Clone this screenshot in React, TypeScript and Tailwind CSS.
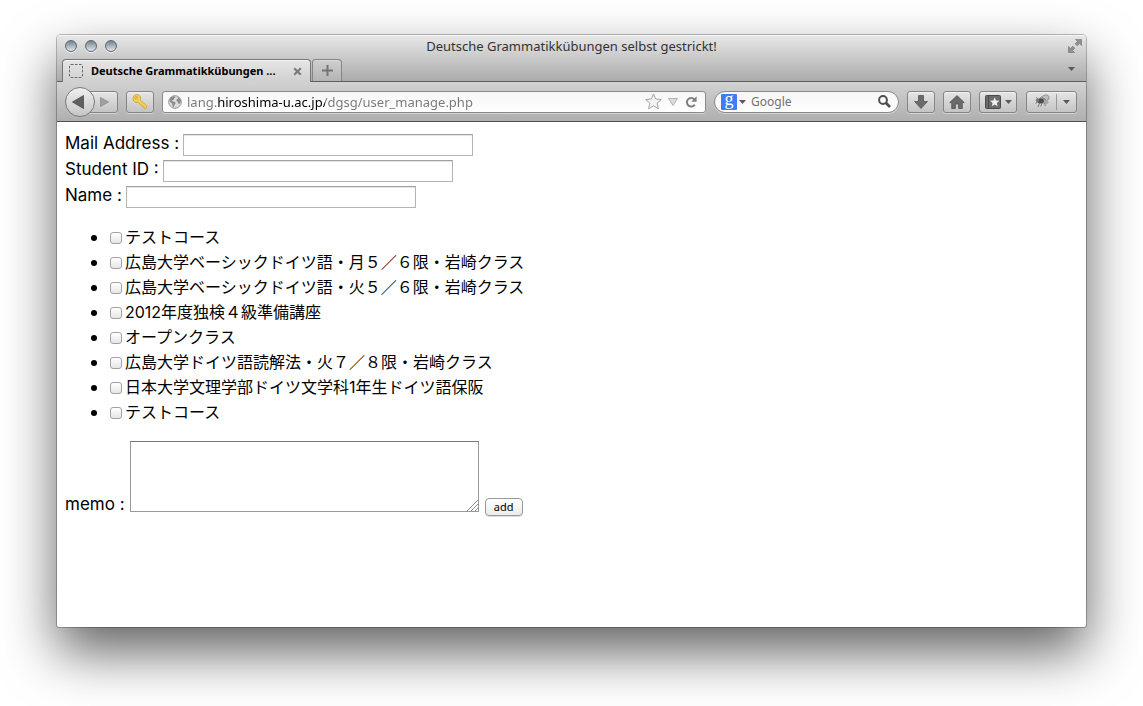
import type { ReactNode } from 'react';

const courses = [
  'テストコース',
  '広島大学ベーシックドイツ語・月５／６限・岩崎クラス',
  '広島大学ベーシックドイツ語・火５／６限・岩崎クラス',
  '2012年度独検４級準備講座',
  'オープンクラス',
  '広島大学ドイツ語読解法・火７／８限・岩崎クラス',
  '日本大学文理学部ドイツ文学科1年生ドイツ語保阪',
  'テストコース',
];

function WindowButton({ label }: { label: string }) {
  return (
    <button
      aria-label={label}
      className="h-3 w-3 rounded-full border border-[#5f666d] bg-linear-to-b from-[#77828c] via-[#a9b5bf] to-[#dfe8ef] shadow-[0_1px_0_#f4f4f4]"
    />
  );
}

function ToolButton({ label, className, children }: { label: string; className: string; children: ReactNode }) {
  return (
    <button
      aria-label={label}
      className={`flex h-[22px] shrink-0 items-center justify-center rounded-[3px] border border-[#858585] bg-linear-to-b from-[#e6e6e6] to-[#c4c4c4] shadow-[0_1px_0_#d4d4d4,inset_0_1px_0_#f0f0f0] ${className}`}
    >
      {children}
    </button>
  );
}

function Caret() {
  return (
    <svg width="7" height="4" viewBox="0 0 7 4" className="shrink-0">
      <path d="M0 0h7L3.5 4z" fill="#5a5a5a" />
    </svg>
  );
}

function TitleBar() {
  return (
    <div className="grid h-[22px] grid-cols-[1fr_auto_1fr] items-center px-1">
      <div className="flex gap-2 pl-1">
        <WindowButton label="Close" />
        <WindowButton label="Minimize" />
        <WindowButton label="Zoom" />
      </div>
      <h1 className="text-[13px] leading-5 text-[#333]">Deutsche Grammatikkübungen selbst gestrickt!</h1>
      <button aria-label="Full screen" className="justify-self-end">
        <svg width="14" height="14" viewBox="0 0 14 14" fill="#909090" stroke="#707070" strokeWidth="0.6">
          <path d="M7.5.5h6v6l-2-2-2.3 2.3-2-2 2.3-2.3z" />
          <path d="M.5 7.5l2 2 2.3-2.3 2 2-2.3 2.3 2 2h-6z" />
        </svg>
      </button>
    </div>
  );
}

function TabStrip() {
  return (
    <div className="flex h-[25px] items-end border-b border-[#5e5e5e] pr-[11px] pl-[5px]">
      <div className="relative -mb-px flex h-[23px] w-[249px] items-center rounded-t-[4px] border border-b-0 border-[#767676] bg-linear-to-b from-[#e6e6e6] to-[#d0d0d0] pr-2 pl-[6px] shadow-[inset_0_1px_0_#f4f4f4]">
        <svg width="14" height="14" viewBox="0 0 14 14" className="shrink-0">
          <rect x="0.5" y="0.5" width="13" height="13" rx="1.5" fill="none" stroke="#666" strokeDasharray="2.5 1.5" />
        </svg>
        <span className="ml-2 flex-1 truncate text-[11px] leading-5 font-bold text-black">Deutsche Grammatikkübungen ...</span>
        <button aria-label="Close tab">
          <svg width="9" height="9" viewBox="0 0 9 9">
            <path d="M1.2 1.2l6.600 6.600M7.800 1.200L1.200 7.800" stroke="#7c7c7c" strokeWidth="2.2" />
          </svg>
        </button>
      </div>
      <button
        aria-label="New tab"
        className="ml-px flex h-[22px] w-[30px] items-center justify-center rounded-t-[4px] border border-b-0 border-[#858585] bg-linear-to-b from-[#cfcfcf] to-[#b4b4b4] shadow-[inset_0_1px_0_#dadada]"
      >
        <svg width="11" height="11" viewBox="0 0 11 11">
          <path d="M5.5 0v11M0 5.5h11" stroke="#747474" strokeWidth="2" />
        </svg>
      </button>
      <button aria-label="List all tabs" className="ml-auto flex h-6 items-center">
        <Caret />
      </button>
    </div>
  );
}

function BackForward() {
  return (
    <div className="flex shrink-0 items-center">
      <button
        aria-label="Back"
        className="z-10 flex h-[30px] w-[30px] items-center justify-center rounded-full border border-[#7a7a7a] bg-linear-to-b from-[#efefef] to-[#c6c6c6]"
      >
        <svg width="12" height="14" viewBox="0 0 12 14" className="-ml-1">
          <path d="M11.5.5v13L.5 7z" fill="#606060" stroke="#444" strokeWidth="0.7" />
        </svg>
      </button>
      <ToolButton label="Forward" className="-ml-2 w-[31px] pl-1">
        <svg width="9" height="10" viewBox="0 0 9 10">
          <path d="M.5.5v9L8.5 5z" fill="#a0a0a0" stroke="#888" strokeWidth="0.7" />
        </svg>
      </ToolButton>
    </div>
  );
}

function LocationBar() {
  return (
    <div className="flex h-[22px] min-w-0 flex-1 items-center rounded-[3px] border border-[#8a8a8a] bg-linear-to-b from-[#f6f6f6] to-white pr-2 pl-[5px] shadow-[0_1px_0_#d4d4d4]">
      <svg width="14" height="14" viewBox="0 0 14 14" className="shrink-0">
        <circle cx="7" cy="7" r="6.3" fill="#dcdcdc" stroke="#939393" />
        <path
          d="M1.5 4.2C2.6 2.2 4.5 1 6.6 1.2l1 1-1.4.7-.3 1.5-1.9.9.6 1.2 2.1.3 1 1.5-1.3 1.6-.5 2.4-1.4-1.3-.3-2.5-2-1.4zM9.3 1.8c2 .8 3.3 2.4 3.5 4.4l-1 2.6-1.5-.4-.5-1.7-1.4-.6.2-1.7 1.5-.7z"
          fill="#8a8a8a"
        />
      </svg>
      <input
        aria-label="Location"
        defaultValue="lang.hiroshima-u.ac.jp/dgsg/user_manage.php"
        className="ml-[5px] min-w-0 flex-1 bg-[linear-gradient(90deg,#777_30px,#000_30px,#000_138px,#777_138px)] bg-clip-text text-[13px] leading-5 text-transparent caret-black outline-none"
      />
      <button aria-label="Bookmark this page">
        <svg width="17" height="17" viewBox="0 0 17 17">
          <path d="M8.5.9l2.2 5.1 5.6.5-4.2 3.7 1.3 5.6-4.9-3-4.9 3 1.3-5.6L.7 6.5 6.3 6z" fill="#f3f3f3" stroke="#a2a2a2" />
        </svg>
      </button>
      <button aria-label="Show history" className="ml-[6px]">
        <svg width="10" height="8" viewBox="0 0 10 8">
          <path d="M.5.5h9L5 7.5z" fill="#dcdcdc" stroke="#b4b4b4" />
        </svg>
      </button>
      <button aria-label="Reload" className="ml-[7px]">
        <svg width="12" height="12" viewBox="0 0 12 12">
          <path d="M9.3 3.2A4.3 4.3 0 1 0 9.8 8.6" fill="none" stroke="#808080" strokeWidth="2" />
          <path d="M11.6.3v5.500H6.200z" fill="#808080" />
        </svg>
      </button>
    </div>
  );
}

function SearchBar() {
  return (
    <div className="flex h-[22px] w-[185px] shrink-0 items-center rounded-full border border-[#8a8a8a] bg-linear-to-b from-[#f6f6f6] to-white pr-[7px] pl-[6px] shadow-[0_1px_0_#d4d4d4]">
      <button aria-label="Search engine" className="flex items-center gap-[2px]">
        <span className="h-4 w-4 rounded-[1px] bg-[#3f7cf5] text-center font-['Liberation_Serif',serif] text-[18px] leading-[11px] text-white">g</span>
        <Caret />
      </button>
      <input
        aria-label="Search"
        placeholder="Google"
        className="ml-[5px] min-w-0 flex-1 text-[12px] leading-5 outline-none placeholder:text-[#707070]"
      />
      <button aria-label="Go">
        <svg width="13" height="13" viewBox="0 0 13 13" fill="none" stroke="#505050">
          <circle cx="5" cy="5" r="3.9" strokeWidth="2" />
          <path d="M8 8l4 4" strokeWidth="2.6" />
        </svg>
      </button>
    </div>
  );
}

function Toolbar() {
  return (
    <div className="flex h-10 items-center gap-2 border-b border-[#505050] bg-linear-to-b from-[#d2d2d2] to-[#afafaf] pr-[9px] pl-2">
      <BackForward />
      <ToolButton label="Passwords" className="w-7">
        <svg width="16" height="16" viewBox="0 0 16 16">
          <path
            d="M2.1 1.6C3.7.2 6.2.3 7.6 1.8c1.1 1.2 1.3 2.8.7 4.1l6.2 5.8-.2 2.6-2.3.2-.3-1.6-1.5-.2-.3-1.6-1.5-.3L6.2 8.3c-1.6.6-3.3.1-4.3-1.1C.6 5.6.7 3 2.1 1.6z"
            fill="#f6cf52"
            stroke="#c79a2c"
            strokeWidth="0.7"
          />
          <circle cx="3.9" cy="3.7" r="1.2" fill="#d8d0b8" stroke="#b88b25" strokeWidth="0.6" />
        </svg>
      </ToolButton>
      <LocationBar />
      <SearchBar />
      <ToolButton label="Downloads" className="w-7">
        <svg width="14" height="14" viewBox="0 0 14 14">
          <path d="M4.5.5h5v6h4L7 13.5.5 6.5h4z" fill="#6b6b6b" stroke="#4a4a4a" strokeWidth="0.7" />
        </svg>
      </ToolButton>
      <ToolButton label="Home" className="w-7">
        <svg width="16" height="14" viewBox="0 0 16 14">
          <path d="M8 .6l7.3 7h-2v5.9H9.6V9H6.4v4.5H2.7V7.6h-2z" fill="#6b6b6b" stroke="#4a4a4a" strokeWidth="0.7" />
        </svg>
      </ToolButton>
      <ToolButton label="Bookmarks" className="w-[38px] gap-1">
        <svg width="16" height="14" viewBox="0 0 16 14">
          <rect x="0.5" y="0.5" width="15" height="13" rx="1" fill="#6b6b6b" stroke="#4a4a4a" />
          <path d="M3.5.5v13" stroke="#4a4a4a" />
          <path d="M9.7 2.3l1.3 3.1 3.4.3-2.6 2.2.8 3.3-2.9-1.8-2.900 1.800.8-3.300L5 5.700l3.400-.3z" fill="#f0f0f0" />
        </svg>
        <Caret />
      </ToolButton>
      <ToolButton label="Firebug" className="ml-px w-[51px]">
        <svg width="16" height="15" viewBox="0 0 16 15" className="shrink-0">
          <ellipse cx="10.5" cy="4.5" rx="4.8" ry="3.1" transform="rotate(-22 10.5 4.5)" fill="#bcbcbc" stroke="#858585" strokeWidth="0.7" />
          <ellipse cx="11" cy="8" rx="3.6" ry="2.2" fill="#a8a8a8" />
          <ellipse cx="6.5" cy="6.8" rx="3.4" ry="2.6" fill="#4c4c4c" />
          <circle cx="3.4" cy="6.5" r="1.7" fill="#7a7a7a" />
          <path d="M3.5 8L1.5 9.5M5.5 9l-1.5 4M8 9l-1.2 3.5M10.5 9.5l1 2.5M4.5 5L2 3.500M8 3.500l4 2.500" stroke="#666" strokeWidth="0.8" />
        </svg>
        <span className="mx-[6px] h-4 w-px bg-[#999]" />
        <Caret />
      </ToolButton>
    </div>
  );
}

function Field({ id, label }: { id: string; label: string }) {
  return (
    <div className="flex h-[26px] items-end gap-1">
      <label htmlFor={id} className="text-[17px] leading-[26px]">{label}</label>
      <input
        id={id}
        type="text"
        className="h-[22px] w-[290px] border border-[#b4b4b4] border-t-[#a0a0a0] px-1 shadow-[inset_0_1px_1px_#e4e4e4] outline-none"
      />
    </div>
  );
}

function UserForm() {
  return (
    <form className="p-2 font-[Inter,'Noto_Sans_CJK_JP',sans-serif] text-[16px] text-black">
      <Field id="mail" label="Mail Address :" />
      <Field id="student" label="Student ID :" />
      <Field id="name" label="Name :" />

      <ul className="mt-[17px] pl-[26px]">
        {courses.map((course, i) => (
          <li key={i} className="flex h-[25px] items-center">
            <span className="h-[6px] w-[6px] rounded-full bg-black" />
            <input
              id={`course-${i}`}
              type="checkbox"
              className="ml-[13px] h-3 w-3 appearance-none rounded-[3px] border border-[#a2a2a2] bg-linear-to-b from-white to-[#e6e6e6]"
            />
            <label htmlFor={`course-${i}`} className="ml-[3px] leading-[25px]">{course}</label>
          </li>
        ))}
      </ul>

      <div className="mt-4 flex items-end">
        <label htmlFor="memo" className="text-[17px] leading-6">memo :</label>
        <div className="relative mb-1 ml-[5px]">
          <textarea id="memo" className="block h-[71px] w-[349px] resize-none border border-[#999] border-t-[#777] px-1 outline-none" />
          <svg width="11" height="11" viewBox="0 0 11 11" className="absolute right-px bottom-px">
            <path d="M0 11L11 0M4 11l7-7M8 11l3-3" stroke="#8a8a8a" />
          </svg>
        </div>
        <button
          type="button"
          className="ml-[6px] h-[18px] w-[38px] rounded-[4px] border border-[#999] bg-linear-to-b from-white to-[#ececec] font-['Noto_Sans',sans-serif] text-[11px] leading-4 shadow-[0_1px_0_#ddd]"
        >
          add
        </button>
      </div>
    </form>
  );
}

export default function App() {
  return (
    <div className="flex min-h-screen flex-col bg-white px-[57px] pt-[35px] pb-[79px] font-['Noto_Sans',sans-serif]">
      <div className="flex flex-1 flex-col overflow-hidden rounded-t-[4px] rounded-b-[2px] bg-white shadow-[0_0_0_1px_rgba(0,0,0,0.25),0_25px_54px_rgba(0,0,0,0.62)]">
        <header>
          <div className="bg-linear-to-b from-[#e8e8e8] to-[#aaaaaa] shadow-[inset_0_1px_0_#f6f6f6]">
            <TitleBar />
            <TabStrip />
          </div>
          <Toolbar />
        </header>
        <main className="flex-1">
          <UserForm />
        </main>
      </div>
    </div>
  );
}
